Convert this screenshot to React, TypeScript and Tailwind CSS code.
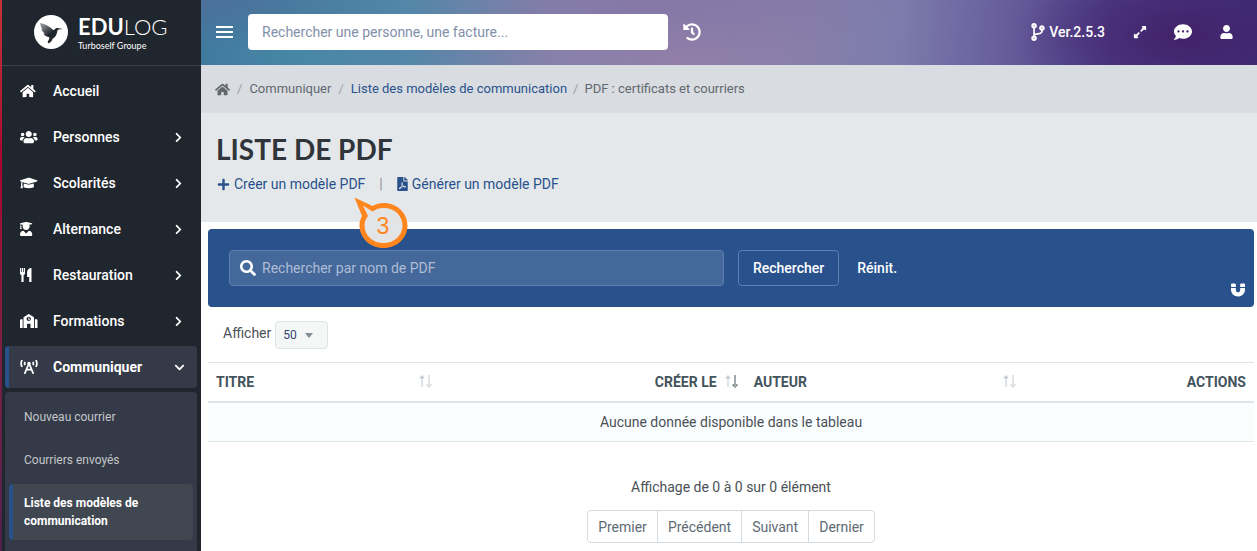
import {
  FaBroadcastTower,
  FaChevronDown,
  FaChevronRight,
  FaCodeBranch,
  FaCommentDots,
  FaExpandAlt,
  FaFilePdf,
  FaGraduationCap,
  FaHistory,
  FaHome,
  FaMagnet,
  FaPlus,
  FaSchool,
  FaSearch,
  FaUser,
  FaUserGraduate,
  FaUsers,
} from "react-icons/fa"

const menu = [
  { label: "Accueil", icon: FaHome, sub: false },
  { label: "Personnes", icon: FaUsers, sub: true },
  { label: "Scolarités", icon: FaGraduationCap, sub: true },
  { label: "Alternance", icon: FaUserGraduate, sub: true },
  { label: "Restauration", icon: ForkKnife, sub: true },
  { label: "Formations", icon: FaSchool, sub: true },
]

const pages = ["Premier", "Précédent", "Suivant", "Dernier"]

function ForkKnife({ className, preserveAspectRatio }: { className?: string; preserveAspectRatio?: string }) {
  return (
    <svg viewBox="0 0 12 14" fill="currentColor" className={className} preserveAspectRatio={preserveAspectRatio}>
      <path d="M0 0h1.200v4h.7V0h1.200v4h.7V0H5v5.200c0 1-.6 1.600-1.400 1.900V14H1.400V7.100C.6 6.800 0 6.200 0 5.200z" />
      <path d="M11.500 0v14H9.200V9H7.100V4c0-2.200 1.900-4 4.400-4z" />
    </svg>
  )
}

function Bird() {
  return (
    <svg viewBox="0 0 34 34" className="size-[34px] shrink-0">
      <defs>
        <linearGradient id="wing" x1="0" y1="0" x2="1" y2="1">
          <stop offset="0" stopColor="#a4a7aa" />
          <stop offset="0.5" stopColor="#20262d" />
        </linearGradient>
      </defs>
      <circle cx="17" cy="17" r="17" fill="#fff" />
      <path
        d="M6 8c4 .7 9.500 3 13 6.800.7.500 1.300 0 1.800-.6.900-1.100 2.500-1.500 4-1l4 .8-4 .5c-.9.200-1.300.8-1.500 1.800-.5 3.800-2.300 6.200-4.700 7.500-.7 1.600-1.200 3.600-3.800 4.400-1-.3-1.300-1.200-.9-2 1-1.200 1.500-2.400 1.500-3.900-2.800-.5-4.800-1.800-6-3.900l1.500.4c-1.900-1.500-3.200-3.300-3.700-5.300l1.300.9C7 12.200 6.200 10 6 8z"
        fill="url(#wing)"
      />
    </svg>
  )
}

function Callout() {
  return (
    <svg viewBox="0 0 56 54" className="pointer-events-none absolute left-[137px] top-[22px] z-10 h-[54px] w-14">
      <path
        d="M1.500 1.500L19.500 10C23 8 26.500 7 30.500 7c13.500 0 24 10 24 22.500S44 52 30.500 52s-24-10-24-22.500c0-4 .9-6.500 2.500-9.500z"
        fill="#ff851f"
      />
      <path
        d="M10 9.500l9.500 6C23 13 26.500 12 30.500 12c11 0 19 7.800 19 17.500S41.500 47 30.500 47s-19-7.800-19-17.500c0-3.500 1-6.500 3.500-9.500z"
        fill="#e3e4e5"
      />
      <text x="30" y="38" textAnchor="middle" fontSize="23" fill="#ff851f" fontFamily="Liberation Sans, sans-serif">
        3
      </text>
    </svg>
  )
}

function SortArrows({ desc = false }: { desc?: boolean }) {
  return (
    <svg viewBox="0 0 13 13" className="h-[13px] w-[13px] shrink-0" aria-hidden="true">
      <path d="M2.500 1h1v11h-1zM0 3.500L3 0l3 3.500z" fill="#c4cacf" />
      <path d="M9.500 0h1v12h-1zM7 9.500L10 13l3-3.500z" fill={desc ? "#44545c" : "#c4cacf"} />
    </svg>
  )
}

function Sidebar() {
  return (
    <aside className="flex w-[199px] shrink-0 flex-col bg-[#20262d] text-white">
      <div className="flex h-[66px] shrink-0 items-center gap-[10px] border-b border-[#3a4047] pb-px pl-[32px]">
        <Bird />
        <div className="flex flex-col font-[Lato,sans-serif]">
          <span className="text-[22px] leading-[26px]">
            <b className="font-bold">EDU</b>
            <span className="font-light">LOG</span>
          </span>
          <span className="text-[9px] leading-[11px]">Turboself Groupe</span>
        </div>
      </div>

      <nav className="flex grow flex-col gap-1 pl-[3px] pr-1 pt-1">
        {menu.map((item) => (
          <a key={item.label} href="#" className="flex h-[42px] shrink-0 items-center pl-[15px] pr-[13px] text-sm font-medium">
            <span className="flex w-[33px]">
              <item.icon className="h-[14px] w-[18px]" preserveAspectRatio="xMinYMid meet" />
            </span>
            <span className="grow">{item.label}</span>
            {item.sub && <FaChevronRight className="size-[11px]" />}
          </a>
        ))}
        <a
          href="#"
          className="flex h-[42px] shrink-0 items-center rounded border-l-4 border-[#29518c] bg-[#343a47] pl-[11px] pr-3 text-sm font-bold"
        >
          <span className="flex w-[33px]">
            <FaBroadcastTower className="h-[14px] w-[18px]" />
          </span>
          <span className="grow">Communiquer</span>
          <FaChevronDown className="size-[11px]" />
        </a>

        <div className="flex grow flex-col gap-[5px] rounded-t bg-[#343a47] px-1 pt-[6px] text-xs leading-[18px] text-[#c3c6ca]">
          <a href="#" className="px-[15px] py-[10px]">Nouveau courrier</a>
          <a href="#" className="px-[15px] py-[10px]">Courriers envoyés</a>
          <a href="#" className="rounded border-l-4 border-[#29518c] bg-[#414751] px-[11px] py-[10px] font-bold text-white">
            Liste des modèles de communication
          </a>
        </div>
      </nav>
    </aside>
  )
}

function TopBar() {
  return (
    <header className="flex h-[65px] shrink-0 items-center bg-[radial-gradient(170px_80px_at_93%_55%,#42226a_0%,#42226a00_100%),radial-gradient(220px_60px_at_45%_0%,#7a6fa688_0%,#7a6fa600_100%),radial-gradient(200px_50px_at_0%_0%,#4c709a_0%,#4c709a00_100%),linear-gradient(95deg,#3f7a9e_0%,#4887a6_10%,#5486a8_20%,#8680a9_33%,#917fa8_45%,#8b7fa9_55%,#7c7cac_66%,#69609d_75%,#4e4089_86%,#3b2f77_100%)] pb-px pl-[15px] pr-6 text-white">
      <button type="button" aria-label="Menu">
        <svg viewBox="0 0 17 12" fill="currentColor" className="h-3 w-[17px]">
          <path d="M0 0h17v2H0zM0 5h17v2H0zM0 10h17v2H0z" />
        </svg>
      </button>
      <input
        type="text"
        aria-label="Recherche"
        placeholder="Rechercher une personne, une facture..."
        className="ml-[15px] h-9 w-[41.3%] rounded bg-white px-[14px] text-sm text-gray-700 placeholder:text-[#8290a9]"
      />
      <button type="button" aria-label="Historique" className="ml-[15px]">
        <FaHistory className="size-[18px]" />
      </button>
      <div className="ml-auto flex items-center">
        <span className="flex items-center gap-1 text-sm font-medium">
          <FaCodeBranch className="h-[18px] w-[14px]" />
          Ver.2.5.3
        </span>
        <button type="button" aria-label="Plein écran" className="ml-[28px]">
          <FaExpandAlt className="size-[14px]" />
        </button>
        <button type="button" aria-label="Messages" className="ml-[27px]">
          <FaCommentDots className="size-[18px]" />
        </button>
        <button type="button" aria-label="Compte" className="ml-[28px]">
          <FaUser className="h-[14px] w-[13px]" />
        </button>
      </div>
    </header>
  )
}

export default function App() {
  return (
    <div className="flex h-screen overflow-hidden bg-white font-[Roboto,sans-serif] text-sm text-[#4b5157]">
      <div className="w-[2px] shrink-0 bg-linear-to-b from-[#c0343a] via-[#a8002f] via-30% to-[#4f2050]" />
      <Sidebar />
      <div className="flex min-w-0 grow flex-col">
        <TopBar />

        <nav className="flex h-12 shrink-0 items-center gap-[6px] bg-[#d9dde1] px-[14px] text-[13px] text-[#62686f]">
          <FaHome className="size-[15px]" />
          <span className="px-px text-[#9ba1a7]">/</span>
          <span>Communiquer</span>
          <span className="px-px text-[#9ba1a7]">/</span>
          <a href="#" className="text-[#29518c]">Liste des modèles de communication</a>
          <span className="text-[#9ba1a7]">/</span>
          <span>PDF : certificats et courriers</span>
        </nav>

        <section className="h-[109px] shrink-0 bg-[#e5e8eb] px-[15px] pt-5">
          <h1 className="font-[Lato,sans-serif] text-[28px] font-bold leading-8 text-[#2f353b]">LISTE DE PDF</h1>
          <div className="relative mt-[9px] flex items-center pl-px text-sm text-[#29518c]">
            <a href="#" className="flex items-center gap-1">
              <FaPlus className="size-[13px]" />
              Créer un modèle PDF
            </a>
            <span className="mx-[14px] text-[#8c9299]">|</span>
            <a href="#" className="flex items-center gap-1">
              <FaFilePdf className="h-[14px] w-[11px]" />
              Générer un modèle PDF
            </a>
            <Callout />
          </div>
        </section>

        <main className="pl-[7px] pr-[3px] pt-[7px]">
          <form className="relative flex h-[78px] items-center rounded bg-[#29518c] px-[21px] text-white">
            <label className="mr-[14px] flex h-9 w-[49.3%] items-center gap-[6px] rounded border border-[#5f7fb0] bg-[#45689b] px-[10px]">
              <FaSearch className="size-4" />
              <input
                type="text"
                aria-label="Nom de PDF"
                placeholder="Rechercher par nom de PDF"
                className="min-w-0 grow bg-transparent placeholder:text-[#adbdd6]"
              />
            </label>
            <button type="button" className="h-9 rounded border border-[#5f7fb0] px-[14px] font-medium">
              Rechercher
            </button>
            <button type="button" className="ml-[18px] font-medium">Réinit.</button>
            <FaMagnet className="absolute bottom-[10px] right-[9px] size-[14px]" />
          </form>

          <div className="flex items-start gap-1 pb-[13px] pl-[15px] pt-[14px]">
            <label htmlFor="length" className="leading-6">Afficher</label>
            <span className="relative flex items-center">
              <select
                id="length"
                defaultValue="50"
                className="h-7 w-[53px] appearance-none rounded border border-[#dde5e7] bg-[#f5f6f6] pl-[7px] text-xs text-[#2f4570]"
              >
                <option>25</option>
                <option>50</option>
                <option>100</option>
              </select>
              <svg viewBox="0 0 8 5" className="pointer-events-none absolute right-[15px] h-[5px] w-2">
                <path d="M0 0h8L4 5z" fill="#858d94" />
              </svg>
            </span>
          </div>

          <table className="w-full table-fixed">
            <thead>
              <tr className="h-[39px] border-b-2 border-t border-[#dde5e7] text-[#44545c]">
                <th className="w-[22.2%] px-2 text-left font-bold">
                  <span className="flex items-center justify-between">TITRE <SortArrows /></span>
                </th>
                <th className="w-[29.2%] px-2 font-bold">
                  <span className="flex items-center justify-end gap-2">CRÉER LE <SortArrows desc /></span>
                </th>
                <th className="w-[26.6%] px-2 text-left font-bold">
                  <span className="flex items-center justify-between">AUTEUR <SortArrows /></span>
                </th>
                <th className="px-2 text-right font-bold">ACTIONS</th>
              </tr>
            </thead>
            <tbody>
              <tr className="h-10 border-b border-[#dde5e7] bg-[#fafdfe]">
                <td colSpan={4} className="text-center">Aucune donnée disponible dans le tableau</td>
              </tr>
            </tbody>
          </table>

          <div className="flex flex-col items-center gap-[13px] pt-[35px]">
            <p>Affichage de 0 à 0 sur 0 élément</p>
            <div className="flex h-[33px] divide-x divide-[#d5dce1] rounded border border-[#d5dce1] text-[#5e6a73]">
              {pages.map((page) => (
                <button key={page} type="button" className="px-[10px]">
                  {page}
                </button>
              ))}
            </div>
          </div>
        </main>
      </div>
    </div>
  )
}
